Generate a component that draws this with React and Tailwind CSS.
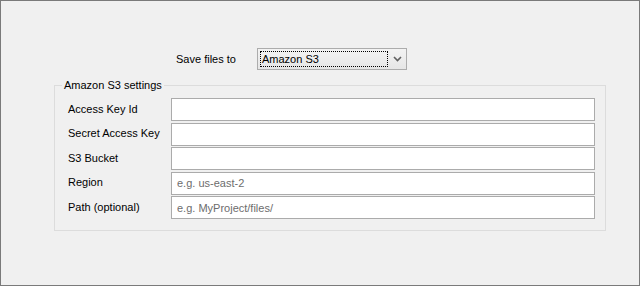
import React from 'react';

const FIELDS = [
  { label: 'Access Key Id', placeholder: '' },
  { label: 'Secret Access Key', placeholder: '' },
  { label: 'S3 Bucket', placeholder: '' },
  { label: 'Region', placeholder: 'e.g. us-east-2' },
  { label: 'Path (optional)', placeholder: 'e.g. MyProject/files/' },
];

function Chevron() {
  return (
    <svg width="9" height="6" viewBox="0 0 9 6" className="block">
      <path d="M1 1 L4.5 4.5 L8 1" fill="none" stroke="#606060" strokeWidth="1.6" />
    </svg>
  );
}

export default function App() {
  return (
    <div
      className="w-[640px] h-[286px] border border-[#7a7a7a] bg-[#f0f0f0] text-[11px] text-black overflow-hidden"
      style={{ fontFamily: '"Liberation Sans", Arial, sans-serif' }}
    >
      {/* target row */}
      <div className="flex items-center pt-[47px] pl-[175px]">
        <span className="w-[81px] pt-[1px]">Save files to</span>
        <div className="flex items-center w-[150px] h-[22px] border border-[#acacac] bg-gradient-to-b from-[#f3f3f3] to-[#e6e6e6]">
          <div className="ml-[2px] w-[128px] h-[16px] border border-dotted border-black flex items-center pl-[1px] leading-none">
            Amazon S3
          </div>
          <div className="ml-auto mr-[4px]">
            <Chevron />
          </div>
        </div>
      </div>

      {/* settings group */}
      <fieldset className="mt-[9px] ml-[53px] w-[552px] border border-[#dcdcdc] px-0 pb-[11px] pt-[6px]">
        <legend className="ml-[7px] px-[2px] leading-[13px]">Amazon S3 settings</legend>
        <div className="grid grid-cols-[103px_424px] gap-y-[1.5px] pl-[13px]">
          {FIELDS.map((f) => (
            <React.Fragment key={f.label}>
              <div className="flex items-center h-[23px] pb-[1px]">{f.label}</div>
              <input
                className="h-[23px] w-[424px] border border-[#ababab] bg-white pl-[5px] text-[11px] outline-none placeholder:text-[#6d6d6d]"
                style={{ fontFamily: '"Liberation Sans", Arial, sans-serif' }}
                placeholder={f.placeholder}
                readOnly
              />
            </React.Fragment>
          ))}
        </div>
      </fieldset>
    </div>
  );
}
